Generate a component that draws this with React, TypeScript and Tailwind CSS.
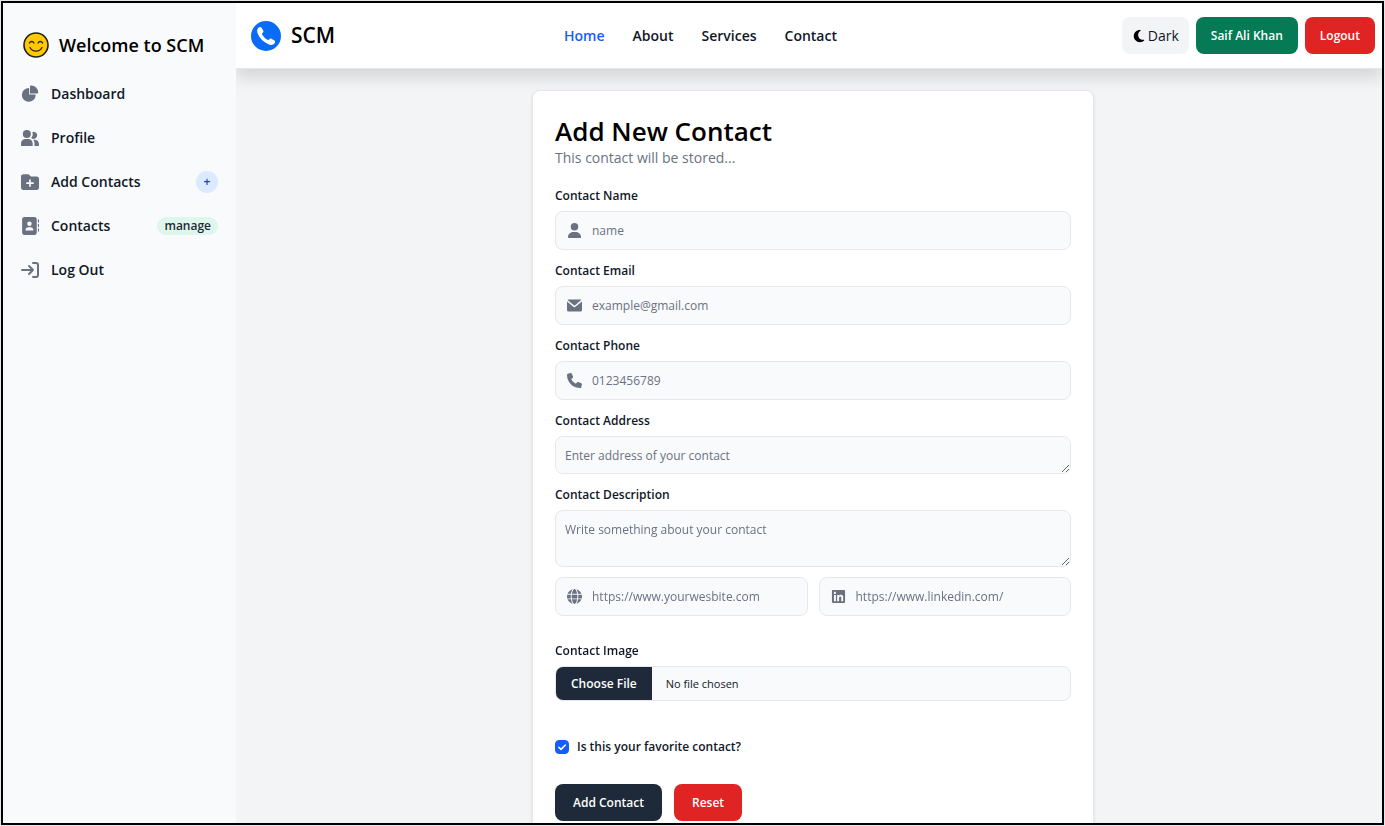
import type { ReactNode } from "react";
import { FaAddressBook, FaFolderPlus, FaGlobe, FaLinkedin, FaMoon, FaPhone, FaUser } from "react-icons/fa6";

const PieIcon = () => (
  <svg viewBox="0 0 22 21" fill="currentColor" className="size-[18px]" aria-hidden="true">
    <path d="M16.975 11H10V4.025a1 1 0 0 0-1.066-.998 8.5 8.5 0 1 0 9.039 9.039.999.999 0 0 0-1-1.066h.002Z" />
    <path d="M12.5 0c-.157 0-.311.01-.565.027A1 1 0 0 0 11 1.02V10h8.975a1 1 0 0 0 1-.935c.013-.188.028-.374.028-.565A8.51 8.51 0 0 0 12.5 0Z" />
  </svg>
);

const UsersIcon = () => (
  <svg viewBox="0 0 20 18" fill="currentColor" className="size-[18px]" aria-hidden="true">
    <path d="M14 2a3.963 3.963 0 0 0-1.4.267 6.439 6.439 0 0 1-1.331 6.638A4 4 0 1 0 14 2Zm1 9h-1.264A6.957 6.957 0 0 1 15 15v2a2.97 2.97 0 0 1-.184 1H19a1 1 0 0 0 1-1v-1a5.006 5.006 0 0 0-5-5ZM6.5 9a4.5 4.5 0 1 0 0-9 4.5 4.5 0 0 0 0 9ZM8 10H5a5.006 5.006 0 0 0-5 5v2a1 1 0 0 0 1 1h11a1 1 0 0 0 1-1v-2a5.006 5.006 0 0 0-5-5Z" />
  </svg>
);

const SignOutIcon = () => (
  <svg viewBox="0 0 18 16" fill="none" stroke="currentColor" strokeWidth="2" strokeLinecap="round" strokeLinejoin="round" className="size-[18px]" aria-hidden="true">
    <path d="M1 8h11m0 0L8 4m4 4-4 4m4-11h3a2 2 0 0 1 2 2v10a2 2 0 0 1-2 2h-3" />
  </svg>
);

const MailIcon = () => (
  <svg viewBox="0 0 20 16" fill="currentColor" className="size-[15px]" aria-hidden="true">
    <path d="m10.036 8.278 9.258-7.79A1.979 1.979 0 0 0 18 0H2A1.987 1.987 0 0 0 .641.541l9.395 7.737Z" />
    <path d="M11.241 9.817c-.36.275-.801.425-1.255.427-.428 0-.845-.138-1.187-.395L0 2.6V14a2 2 0 0 0 2 2h16a2 2 0 0 0 2-2V2.5l-8.759 7.317Z" />
  </svg>
);

const SmileIcon = () => (
  <svg viewBox="0 0 26 26" className="size-[26px]" aria-hidden="true">
    <circle cx="13" cy="13" r="12" fill="#ffc800" stroke="#1f1f1f" strokeWidth="1.6" />
    <path d="M6.500 11c.8-2 3.600-2 4.400 0M15.100 11c.8-2 3.600-2 4.400 0M7 15.500c2.500 4.800 9.500 4.800 12 0" fill="none" stroke="#2a2a1a" strokeWidth="1.400" strokeLinecap="round" />
  </svg>
);

const LogoIcon = () => (
  <span className="flex size-[30px] items-center justify-center rounded-full bg-[#0a6cf5] text-white">
    <svg viewBox="0 0 20 20" fill="currentColor" className="size-5" aria-hidden="true">
      <path d="M2.600 1.600C4 .5 5 .7 5.700 1.900l1.500 2.700c.5 1 .3 1.600-.6 2.300-.8.600-.8 1.100-.2 2.100 1.200 1.900 2.700 3.400 4.600 4.600 1 .6 1.500.6 2.100-.2.700-.9 1.300-1.100 2.300-.6l2.700 1.500c1.200.7 1.400 1.700.3 3.100-1.400 1.600-3.600 1.900-6 .9C7.600 16.300 3.700 12.400 1.700 7.600.7 5.200 1 3 2.600 1.600Z" />
    </svg>
  </span>
);

const sideLinks: { label: string; icon: ReactNode; badge?: ReactNode }[] = [
  { label: "Dashboard", icon: <PieIcon /> },
  { label: "Profile", icon: <UsersIcon /> },
  {
    label: "Add Contacts",
    icon: <FaFolderPlus className="size-[18px]" />,
    badge: <span className="flex size-[22px] items-center justify-center rounded-full bg-blue-100 text-xs font-semibold text-blue-800">+</span>,
  },
  {
    label: "Contacts",
    icon: <FaAddressBook className="size-[18px]" />,
    badge: <span className="rounded-full bg-[#def7ec] px-[7px] text-xs leading-[18px] font-semibold text-gray-800">manage</span>,
  },
  { label: "Log Out", icon: <SignOutIcon /> },
];

const fieldBox = "block w-full rounded-lg border border-gray-200 bg-gray-50 text-xs leading-[18px] text-gray-900 placeholder:text-gray-500";
const labelText = "mb-[6px] block text-xs leading-[18px] font-semibold text-gray-900";

function IconInput({ id, type, placeholder, icon, label }: { id: string; type: string; placeholder: string; icon: ReactNode; label?: string }) {
  return (
    <div className="min-w-0 flex-1">
      {label && <label htmlFor={id} className={labelText}>{label}</label>}
      <div className="relative">
        <span className="pointer-events-none absolute inset-y-0 left-0 flex items-center pl-3 text-gray-500">{icon}</span>
        <input id={id} type={type} placeholder={placeholder} aria-label={label ?? placeholder} className={`${fieldBox} h-[39px] pr-2 pl-9`} />
      </div>
    </div>
  );
}

export default function App() {
  return (
    <div className="h-screen bg-gray-200 p-px font-['Open_Sans','Noto_Sans',sans-serif]">
      <div className="flex h-full overflow-hidden border-2 border-black bg-gray-100">
        <aside className="z-20 w-[233px] shrink-0 bg-gray-50 px-[11px] pt-[27px]">
          <a href="#home" className="mb-3 flex items-center gap-[10px] pl-[9px] text-lg leading-[30px] font-semibold text-black">
            <SmileIcon />
            Welcome to SCM
          </a>
          <ul>
            {sideLinks.map((item) => (
              <li key={item.label}>
                <a href="#side" className="flex h-11 items-center px-[7px] text-sm font-semibold text-gray-900">
                  <span className="text-gray-500">{item.icon}</span>
                  <span className="ml-3 flex-1">{item.label}</span>
                  {item.badge}
                </a>
              </li>
            ))}
          </ul>
        </aside>

        <div className="flex min-w-0 flex-1 flex-col">
          <header className="z-10 flex h-[66px] shrink-0 items-center justify-between border-b border-gray-200 bg-white pr-[7px] pl-[15px] shadow-[0_9px_14px_rgba(0,0,0,0.12)]">
            <a href="#home" className="flex items-center gap-[10px] text-[21px] font-semibold text-black">
              <LogoIcon />
              SCM
            </a>
            <nav className="flex gap-7 pr-14 text-sm font-semibold text-gray-900">
              <a href="#home" className="text-blue-600">Home</a>
              <a href="#about">About</a>
              <a href="#services">Services</a>
              <a href="#contact">Contact</a>
            </nav>
            <div className="flex items-center gap-[7px]">
              <button type="button" className="flex h-[37px] items-center gap-[2px] rounded-lg bg-gray-100 px-[10px] text-sm text-gray-900">
                <FaMoon className="size-[14px] text-black" />
                Dark
              </button>
              <button type="button" className="h-[37px] rounded-lg bg-[#057a55] px-[15px] text-xs font-semibold text-white">Saif Ali Khan</button>
              <button type="button" className="h-[37px] rounded-lg bg-[#e02424] px-[15px] text-xs font-semibold text-white">Logout</button>
            </div>
          </header>

          <main className="flex-1 overflow-y-auto pt-[21px] pr-4 pl-6 [scrollbar-width:none]">
            <div className="mx-auto w-full max-w-[562px] rounded-lg border border-gray-200 bg-white px-[22px] pt-[22px] pb-6 shadow-sm">
              <h1 className="text-[26px] leading-9 font-semibold text-black">Add New Contact</h1>
              <p className="text-sm leading-[18px] text-gray-500">This contact will be stored...</p>
              <form className="mt-5">
                <div className="flex flex-col gap-3">
                  <IconInput id="name" type="text" label="Contact Name" placeholder="name" icon={<FaUser className="size-[15px]" />} />
                  <IconInput id="email" type="email" label="Contact Email" placeholder="example@gmail.com" icon={<MailIcon />} />
                  <IconInput id="phone" type="tel" label="Contact Phone" placeholder="0123456789" icon={<FaPhone className="size-[15px]" />} />
                  <div>
                    <label htmlFor="address" className={labelText}>Contact Address</label>
                    <textarea id="address" rows={1} placeholder="Enter address of your contact" className={`${fieldBox} h-[38px] resize-y px-[9px] py-[10px]`} />
                  </div>
                  <div>
                    <label htmlFor="description" className={labelText}>Contact Description</label>
                    <textarea id="description" rows={2} placeholder="Write something about your contact" className={`${fieldBox} h-[57px] resize-y px-[9px] py-[10px]`} />
                  </div>
                </div>
                <div className="mt-[10px] flex gap-[11px]">
                  <IconInput id="website" type="url" placeholder="https://www.yourwesbite.com" icon={<FaGlobe className="size-[15px]" />} />
                  <IconInput id="linkedin" type="url" placeholder="https://www.linkedin.com/" icon={<FaLinkedin className="size-[15px]" />} />
                </div>
                <div className="mt-[26px]">
                  <label htmlFor="image" className={labelText}>Contact Image</label>
                  <input
                    id="image"
                    type="file"
                    className="block h-[35px] w-full rounded-lg border border-gray-200 bg-gray-50 text-[11px] text-gray-900 file:mr-[14px] file:h-[33px] file:bg-gray-800 file:px-[15px] file:text-xs file:font-semibold file:text-white"
                  />
                </div>
                <div className="mt-[37px] flex items-center">
                  <span className="relative flex size-[14px]">
                    <input id="favorite" type="checkbox" defaultChecked className="peer size-[14px] appearance-none rounded border border-gray-300 bg-gray-100 checked:border-blue-600 checked:bg-blue-600" />
                    <svg viewBox="0 0 14 14" fill="none" stroke="currentColor" strokeWidth="1.500" strokeLinecap="round" strokeLinejoin="round" className="pointer-events-none absolute inset-0 hidden text-white peer-checked:block" aria-hidden="true">
                      <path d="m3.800 7.200 2.200 2.200 4.400-4.400" />
                    </svg>
                  </span>
                  <label htmlFor="favorite" className="ml-2 text-xs leading-[18px] font-semibold text-gray-900">Is this your favorite contact?</label>
                </div>
                <div className="mt-7 flex gap-3">
                  <button type="submit" className="h-[37px] rounded-lg bg-gray-800 px-[18px] text-xs font-semibold text-white">Add Contact</button>
                  <button type="reset" className="h-[37px] rounded-lg bg-[#e02424] px-[18px] text-xs font-semibold text-white">Reset</button>
                </div>
              </form>
            </div>
          </main>
        </div>
      </div>
    </div>
  );
}
